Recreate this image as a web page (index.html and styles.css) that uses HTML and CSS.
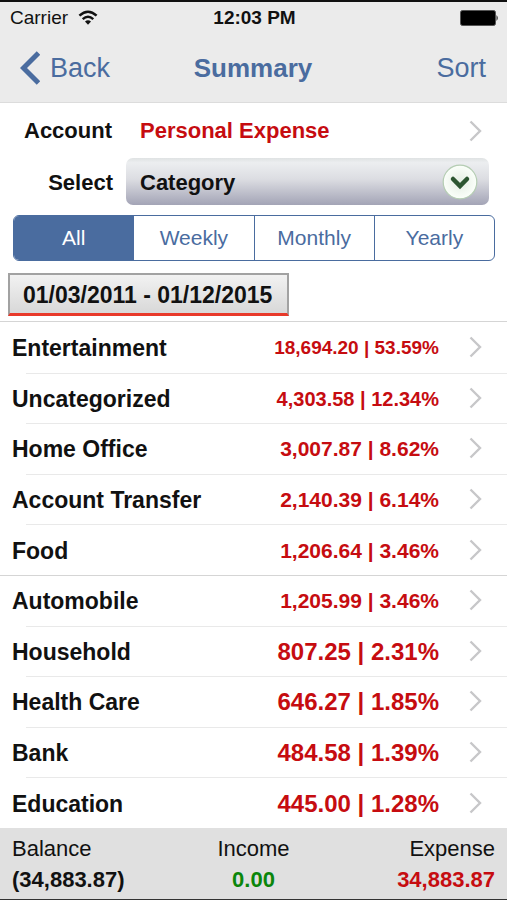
FILE: index.html
```
<!DOCTYPE html>
<html lang="en">
<head>
    <meta charset="UTF-8">
    <meta name="viewport" content="width=device-width, initial-scale=1.0">
    <title>Summary</title>
    <link rel="stylesheet" href="styles.css">
</head>
<body>
    <svg width="0" height="0" class="sprite" aria-hidden="true">
        <symbol id="chevron" viewBox="0 0 14 22">
            <path d="M1.5 1.5 L11 11 L1.5 20.5" fill="none" stroke="#c7c7c9" stroke-width="2.4"/>
        </symbol>
    </svg>

    <header class="header">
        <div class="status-bar">
            <div class="carrier">
                <span>Carrier</span>
                <svg width="20" height="16" viewBox="0 0 20 16">
                    <path d="M1.4 5.6 Q10 -2.2 18.6 5.6" fill="none" stroke="#111" stroke-width="2.5"/>
                    <path d="M4.7 9.2 Q10 4.4 15.3 9.2" fill="none" stroke="#111" stroke-width="2.4"/>
                    <path d="M7 11.6 Q10 9 13 11.6 L10 14.8 Z" fill="#111"/>
                </svg>
            </div>
            <div class="time">12:03 PM</div>
            <div class="battery">
                <svg width="39" height="16" viewBox="0 0 39 16">
                    <rect x="0.5" y="0.5" width="35" height="15" rx="2" fill="#000" stroke="#555"/>
                    <path d="M36.5 5 Q39 8 36.5 11 Z" fill="#222"/>
                </svg>
            </div>
        </div>
        <nav class="nav-bar">
            <a href="#" class="back-link">
                <svg width="20" height="34" viewBox="0 0 20 34">
                    <path d="M18.5 2 L3.5 17 L18.5 32" fill="none" stroke="#4a6c9f" stroke-width="5"/>
                </svg>
                <span>Back</span>
            </a>
            <h1>Summary</h1>
            <a href="#" class="sort-link">Sort</a>
        </nav>
    </header>

    <section class="filters">
        <a href="#" class="account-row">
            <span class="account-label">Account</span>
            <span class="account-name">Personal Expense</span>
            <svg class="chevron" width="14" height="22"><use href="#chevron"/></svg>
        </a>
        <div class="select-row">
            <label for="group-by">Select</label>
            <div class="select-box">
                <select id="group-by">
                    <option>Category</option>
                </select>
                <svg class="select-icon" width="36" height="36" viewBox="0 0 36 36">
                    <defs>
                        <radialGradient id="knob">
                            <stop offset="0" stop-color="#e4ede2"/>
                            <stop offset="1" stop-color="#fbfffa"/>
                        </radialGradient>
                    </defs>
                    <circle cx="18" cy="18" r="16.8" fill="url(#knob)" stroke="#b5cdb3" stroke-width="1.2"/>
                    <path d="M11 15 L18 22 L25 15" fill="none" stroke="#2d5631" stroke-width="4.5" stroke-linecap="round"/>
                </svg>
            </div>
        </div>
        <div class="segments">
            <label><input type="radio" name="period" checked><span>All</span></label>
            <label><input type="radio" name="period"><span>Weekly</span></label>
            <label><input type="radio" name="period"><span>Monthly</span></label>
            <label><input type="radio" name="period"><span>Yearly</span></label>
        </div>
        <button type="button" class="date-range">01/03/2011 - 01/12/2015</button>
    </section>

    <ul class="category-list">
        <li><a href="#"><span class="name">Entertainment</span><span class="amount small">18,694.20 | 53.59%</span><svg class="chevron" width="14" height="22"><use href="#chevron"/></svg></a></li>
        <li><a href="#"><span class="name">Uncategorized</span><span class="amount medium">4,303.58 | 12.34%</span><svg class="chevron" width="14" height="22"><use href="#chevron"/></svg></a></li>
        <li><a href="#"><span class="name">Home Office</span><span class="amount large">3,007.87 | 8.62%</span><svg class="chevron" width="14" height="22"><use href="#chevron"/></svg></a></li>
        <li><a href="#"><span class="name">Account Transfer</span><span class="amount large">2,140.39 | 6.14%</span><svg class="chevron" width="14" height="22"><use href="#chevron"/></svg></a></li>
        <li><a href="#"><span class="name">Food</span><span class="amount large">1,206.64 | 3.46%</span><svg class="chevron" width="14" height="22"><use href="#chevron"/></svg></a></li>
        <li class="group-start"><a href="#"><span class="name">Automobile</span><span class="amount large">1,205.99 | 3.46%</span><svg class="chevron" width="14" height="22"><use href="#chevron"/></svg></a></li>
        <li><a href="#"><span class="name">Household</span><span class="amount">807.25 | 2.31%</span><svg class="chevron" width="14" height="22"><use href="#chevron"/></svg></a></li>
        <li><a href="#"><span class="name">Health Care</span><span class="amount">646.27 | 1.85%</span><svg class="chevron" width="14" height="22"><use href="#chevron"/></svg></a></li>
        <li><a href="#"><span class="name">Bank</span><span class="amount">484.58 | 1.39%</span><svg class="chevron" width="14" height="22"><use href="#chevron"/></svg></a></li>
        <li><a href="#"><span class="name">Education</span><span class="amount">445.00 | 1.28%</span><svg class="chevron" width="14" height="22"><use href="#chevron"/></svg></a></li>
    </ul>

    <footer>
        <dl class="totals">
            <div>
                <dt>Balance</dt>
                <dd>(34,883.87)</dd>
            </div>
            <div>
                <dt>Income</dt>
                <dd class="income">0.00</dd>
            </div>
            <div>
                <dt>Expense</dt>
                <dd class="expense">34,883.87</dd>
            </div>
        </dl>
    </footer>
</body>
</html>
```
FILE: styles.css
```
* {
    box-sizing: border-box;
}

body {
    font-family: 'Liberation Sans', Arial, sans-serif;
    font-size: 22px;
    line-height: 26px;
    color: #111;
    background-color: white;
    margin: 0;
    display: flex;
    flex-direction: column;
    min-height: 100vh;
}

a {
    color: inherit;
    text-decoration: none;
}

svg {
    display: block;
    flex: none;
}

.sprite {
    position: absolute;
}

/* Header */
.header {
    background-color: #ebebeb;
    border-top: 2px solid #111;
    border-bottom: 1px solid #dcdcdc;
}

.status-bar,
.nav-bar {
    display: grid;
    grid-template-columns: 1fr auto 1fr;
    align-items: center;
}

.status-bar {
    height: 32px;
    padding: 0 8px 0 10px;
    font-size: 19px;
}

.carrier {
    display: flex;
    align-items: center;
    gap: 10px;
}

.time {
    font-weight: bold;
}

.battery {
    justify-self: end;
}

.nav-bar {
    height: 68px;
    padding: 0 21px 0 20px;
    color: #4a6c9f;
    font-size: 27px;
}

.nav-bar h1 {
    margin: 0;
    font-size: 26px;
}

.back-link {
    display: flex;
    align-items: center;
    gap: 10px;
}

.sort-link {
    justify-self: end;
}

/* Filters */
.filters {
    padding: 8px 12px 5px 8px;
    border-bottom: 1px solid #d5d5d5;
}

.account-row {
    display: flex;
    align-items: center;
    height: 39px;
    padding-right: 12px;
    margin-bottom: 8px;
    font-weight: bold;
}

.account-label {
    width: 132px;
    padding-left: 16px;
}

.account-name {
    flex: 1;
    color: #c60c10;
}

.select-row {
    display: flex;
    align-items: center;
    padding-right: 6px;
    font-weight: bold;
}

.select-row label {
    width: 118px;
    padding: 2px 13px 0 0;
    text-align: right;
}

.select-box {
    position: relative;
    flex: 1;
}

.select-box select {
    appearance: none;
    display: block;
    width: 100%;
    height: 47px;
    padding: 2px 50px 0 14px;
    border: none;
    border-radius: 7px;
    background: linear-gradient(#dfe2e3, #eceef0 10%, #dcdde2 45%, #a3a4b6);
    color: #111;
    font: inherit;
}

.select-icon {
    position: absolute;
    top: 6px;
    right: 11px;
    pointer-events: none;
}

.segments {
    display: flex;
    margin: 10px 0 12px 5px;
    border: 1px solid #4a6c9f;
    border-radius: 6px;
    overflow: hidden;
}

.segments label {
    position: relative;
    flex: 1;
    color: #4a6c9f;
    font-size: 21px;
    line-height: 44px;
    text-align: center;
}

.segments label + label {
    border-left: 1px solid #4a6c9f;
}

.segments input {
    position: absolute;
    opacity: 0;
}

.segments span {
    display: block;
}

.segments input:checked + span {
    background-color: #4a6c9f;
    color: white;
}

.date-range {
    display: block;
    height: 43px;
    padding: 2px 15px 0 13px;
    border: 2px solid #a2a2a2;
    border-bottom: 3px solid #e8392a;
    background: linear-gradient(#f2f2f2, #d8d8d8);
    color: #111;
    font: bold 23px/26px 'Liberation Sans', Arial, sans-serif;
}

/* Categories */
.category-list {
    flex: 1;
    display: grid;
    grid-auto-rows: 1fr;
    margin: 0;
    padding: 0;
    list-style: none;
}

.category-list li {
    display: grid;
    min-height: 50px;
    background: linear-gradient(#e9e9e9, #e9e9e9) 26px 0 / 100% 1px no-repeat;
}

.category-list li:first-child {
    background: none;
}

.category-list li.group-start {
    background: linear-gradient(#d5d5d5, #d5d5d5) 0 0 / 100% 1px no-repeat;
}

.category-list a {
    display: flex;
    align-items: center;
    gap: 30px;
    padding: 0 24px 0 12px;
    font-weight: bold;
}

.name {
    flex: 1;
    padding-top: 2px;
    font-size: 23px;
}

.amount {
    padding-top: 2px;
    color: #c60c10;
    font-size: 24px;
}

.amount.large {
    font-size: 21px;
}

.amount.medium {
    font-size: 20px;
}

.amount.small {
    font-size: 19px;
}

/* Totals */
.totals {
    display: grid;
    grid-template-columns: 1fr auto 1fr;
    margin: 0;
    padding: 5px 12px 4px;
    background-color: #e0e0e0;
    border-bottom: 1px solid #333;
}

.totals div {
    text-align: center;
}

.totals div:first-child {
    text-align: left;
}

.totals div:last-child {
    text-align: right;
}

.totals dt,
.totals dd {
    margin: 0;
    line-height: 31px;
}

.totals dd {
    font-weight: bold;
}

.totals .income {
    color: #0b860b;
}

.totals .expense {
    color: #c60c10;
}
```
